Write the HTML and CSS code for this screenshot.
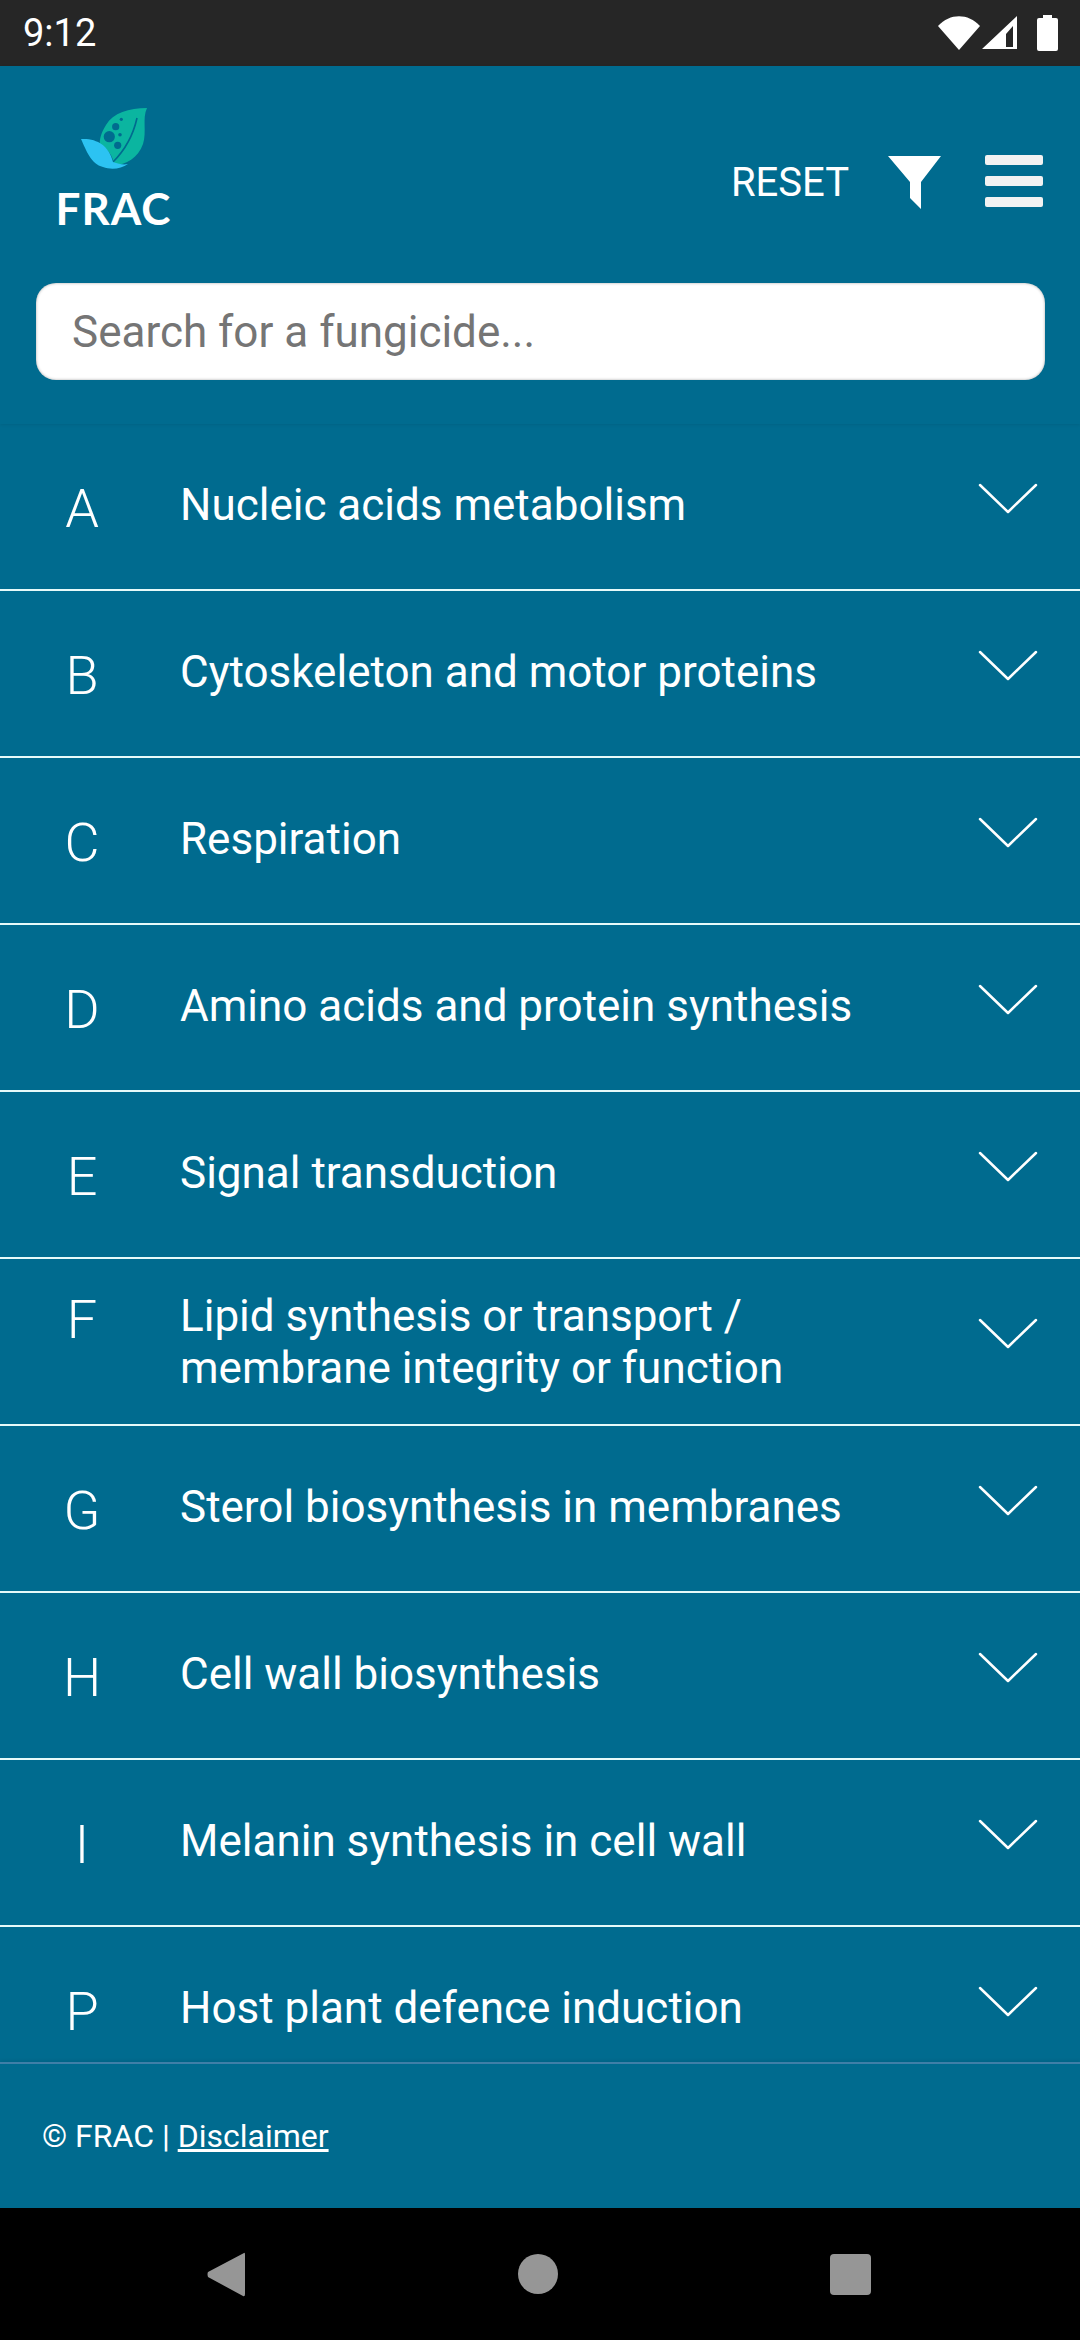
FILE: index.html
```html
<!DOCTYPE html>
<html>
<head>
    <title>FRAC</title>
    <link rel="stylesheet" href="styles.css">
</head>
<body>
    <div class="status-bar">
        <span class="time">9:12</span>
        <div class="status-icons">
            <svg class="icon-wifi" width="42" height="34" viewBox="0 0 42 34"><path d="M0 10 C12 -3 30 -3 42 10 L21 34 Z" fill="#fff"/></svg>
            <svg class="icon-signal" width="35" height="34" viewBox="0 0 35 34"><path fill-rule="evenodd" d="M0 33 L35 0 L35 33 Z M24 18 L24 31 L31 31 L31 10 Z" fill="#fff"/></svg>
            <svg class="icon-battery" width="21" height="36" viewBox="0 0 21 36"><path d="M6 0 H15 V3 H19 Q21 3 21 5 V34 Q21 36 19 36 H2 Q0 36 0 34 V5 Q0 3 2 3 H6 Z" fill="#fff"/></svg>
        </div>
    </div>

    <header class="header">
        <div class="top-row">
            <div class="logo">
                <svg class="logo-leaf" width="66" height="62" viewBox="80 108 66 62">
                    <path d="M146 108 C128 108 112 113 105 125 C100 133 98 140 99 146 C106 148 112 155 113 165 C125 165 137 158 142 144 C146 132 141 118 146 108 Z" fill="#0bb5a0"/>
                    <path d="M136 118 C132 136 124 150 112 162" fill="none" stroke="#006b8f" stroke-width="1.6"/>
                    <circle cx="108.3" cy="136.7" r="5.6" fill="#006b8f"/>
                    <circle cx="114.7" cy="126.7" r="3.6" fill="#006b8f"/>
                    <circle cx="120.3" cy="119.3" r="1.6" fill="#006b8f"/>
                    <circle cx="119" cy="134.7" r="1.8" fill="#006b8f"/>
                    <circle cx="116.7" cy="145.3" r="3.6" fill="#006b8f"/>
                    <path d="M80 139 C95 138 108 145 112 162 C118 164 122 165 127 164 C120 169 110 170 102 167 C90 164 85 150 80 139 Z" fill="#2cc3f2"/>
                </svg>
                <span class="logo-text">FRAC</span>
            </div>
            <div class="actions">
                <span class="reset">RESET</span>
                <svg class="icon-filter" width="53" height="53" viewBox="0 0 53 53"><path d="M0 0 H53 L33 26 V53 L22 42 V26 Z" fill="#fff"/></svg>
                <div class="burger">
                    <span></span>
                    <span></span>
                    <span></span>
                </div>
            </div>
        </div>
        <input class="search" type="text" placeholder="Search for a fungicide...">
    </header>

    <div class="list">
        <div class="row">
            <div class="row-main"><span class="letter">A</span><span class="title">Nucleic acids metabolism</span></div>
            <svg class="chevron" width="60" height="32" viewBox="0 0 60 32"><path d="M2 2 L30 29 L58 2"/></svg>
        </div>
        <div class="row">
            <div class="row-main"><span class="letter">B</span><span class="title">Cytoskeleton and motor proteins</span></div>
            <svg class="chevron" width="60" height="32" viewBox="0 0 60 32"><path d="M2 2 L30 29 L58 2"/></svg>
        </div>
        <div class="row">
            <div class="row-main"><span class="letter">C</span><span class="title">Respiration</span></div>
            <svg class="chevron" width="60" height="32" viewBox="0 0 60 32"><path d="M2 2 L30 29 L58 2"/></svg>
        </div>
        <div class="row">
            <div class="row-main"><span class="letter">D</span><span class="title">Amino acids and protein synthesis</span></div>
            <svg class="chevron" width="60" height="32" viewBox="0 0 60 32"><path d="M2 2 L30 29 L58 2"/></svg>
        </div>
        <div class="row">
            <div class="row-main"><span class="letter">E</span><span class="title">Signal transduction</span></div>
            <svg class="chevron" width="60" height="32" viewBox="0 0 60 32"><path d="M2 2 L30 29 L58 2"/></svg>
        </div>
        <div class="row">
            <div class="row-main"><span class="letter">F</span><span class="title">Lipid synthesis or transport /<br>membrane integrity or function</span></div>
            <svg class="chevron" width="60" height="32" viewBox="0 0 60 32"><path d="M2 2 L30 29 L58 2"/></svg>
        </div>
        <div class="row">
            <div class="row-main"><span class="letter">G</span><span class="title">Sterol biosynthesis in membranes</span></div>
            <svg class="chevron" width="60" height="32" viewBox="0 0 60 32"><path d="M2 2 L30 29 L58 2"/></svg>
        </div>
        <div class="row">
            <div class="row-main"><span class="letter">H</span><span class="title">Cell wall biosynthesis</span></div>
            <svg class="chevron" width="60" height="32" viewBox="0 0 60 32"><path d="M2 2 L30 29 L58 2"/></svg>
        </div>
        <div class="row">
            <div class="row-main"><span class="letter">I</span><span class="title">Melanin synthesis in cell wall</span></div>
            <svg class="chevron" width="60" height="32" viewBox="0 0 60 32"><path d="M2 2 L30 29 L58 2"/></svg>
        </div>
        <div class="row">
            <div class="row-main"><span class="letter">P</span><span class="title">Host plant defence induction</span></div>
            <svg class="chevron" width="60" height="32" viewBox="0 0 60 32"><path d="M2 2 L30 29 L58 2"/></svg>
        </div>
    </div>

    <footer class="footer">
        <span>© FRAC | <a class="footer-link" href="#">Disclaimer</a></span>
    </footer>

    <div class="nav-bar">
        <svg width="38" height="45" viewBox="0 0 38 45"><path d="M37 1 Q38 0 38 3 V42 Q38 45 36 44 L1 25 Q0 22 1 20 Z" fill="#969696"/></svg>
        <div class="nav-home"></div>
        <div class="nav-square"></div>
    </div>
</body>
</html>
```

FILE: styles.css
```css
* {
    box-sizing: border-box;
}
html, body {
    margin: 0;
    height: 2340px;
}
body {
    display: flex;
    flex-direction: column;
    width: 1080px;
    overflow: hidden;
    background-color: #006b8f;
    color: white;
    font-family: Roboto, sans-serif;
}
.status-bar {
    display: flex;
    justify-content: space-between;
    align-items: center;
    height: 66px;
    padding: 0 22px 0 23px;
    background-color: #262626;
}
.time {
    font-size: 38px;
}
.status-icons {
    display: flex;
    align-items: center;
}
.icon-wifi {
    margin-right: 2px;
}
.icon-signal {
    margin-right: 20px;
}
.header {
    position: relative;
    z-index: 1;
    padding: 42px 35px 44px 36px;
    box-shadow: 0 1px 3px rgba(0,0,0,0.08);
}
.top-row {
    display: flex;
    justify-content: space-between;
    align-items: flex-start;
    height: 119px;
    margin-bottom: 56px;
}
.logo {
    display: flex;
    flex-direction: column;
    align-items: center;
    width: 119px;
    margin-left: 18px;
}
.logo-leaf {
    display: block;
}
.logo-text {
    margin-top: 19px;
    font-family: Lato, sans-serif;
    font-size: 44px;
    font-weight: 700;
    line-height: 38px;
    letter-spacing: 1px;
}
.actions {
    display: flex;
    align-items: center;
    height: 54px;
    margin-top: 46px;
    margin-right: 2px;
}
.reset {
    margin-top: 2px;
    margin-right: 39px;
    font-size: 40px;
}
.icon-filter {
    margin-top: 3px;
    margin-right: 44px;
}
.burger {
    display: flex;
    flex-direction: column;
    gap: 11px;
}
.burger span {
    display: block;
    width: 58px;
    height: 10px;
    border-radius: 2px;
    background-color: #f2f2f2;
}
.search {
    display: block;
    width: 1009px;
    height: 97px;
    padding: 0 36px;
    border: none;
    border-radius: 20px;
    background-color: white;
    box-shadow: inset 0 0 3px rgba(0,0,0,0.35);
    font-family: Roboto, sans-serif;
    font-size: 44px;
}
.search::placeholder {
    color: #757575;
    opacity: 1;
}
.list {
    flex: 1;
    min-height: 0;
    overflow: hidden;
}
.row {
    display: flex;
    align-items: center;
    height: 167px;
    border-bottom: 2px solid #e6fafa;
}
.row-main {
    display: flex;
    flex: 1;
    align-items: flex-start;
}
.letter {
    width: 164px;
    margin-top: 4px;
    font-size: 54px;
    font-weight: 300;
    line-height: 52px;
    text-align: center;
}
.title {
    margin-left: 16px;
    font-size: 44px;
    line-height: 52px;
}
.chevron {
    align-self: flex-start;
    margin-top: 59px;
    margin-right: 42px;
    fill: none;
    stroke: white;
    stroke-width: 2.5;
    stroke-linecap: round;
    stroke-linejoin: round;
}
.footer {
    display: flex;
    align-items: center;
    height: 146px;
    padding: 0 42px;
    border-top: 2px solid #3f7fa8;
    box-shadow: 0 -2px 3px rgba(0,0,0,0.06);
    font-size: 32px;
}
.footer-link {
    color: white;
}
.nav-bar {
    display: flex;
    justify-content: space-between;
    align-items: center;
    height: 132px;
    padding: 0 209px 0 207px;
    background-color: black;
}
.nav-home {
    width: 40px;
    height: 40px;
    border-radius: 50%;
    background-color: #969696;
}
.nav-square {
    width: 41px;
    height: 41px;
    border-radius: 4px;
    background-color: #969696;
}
```
